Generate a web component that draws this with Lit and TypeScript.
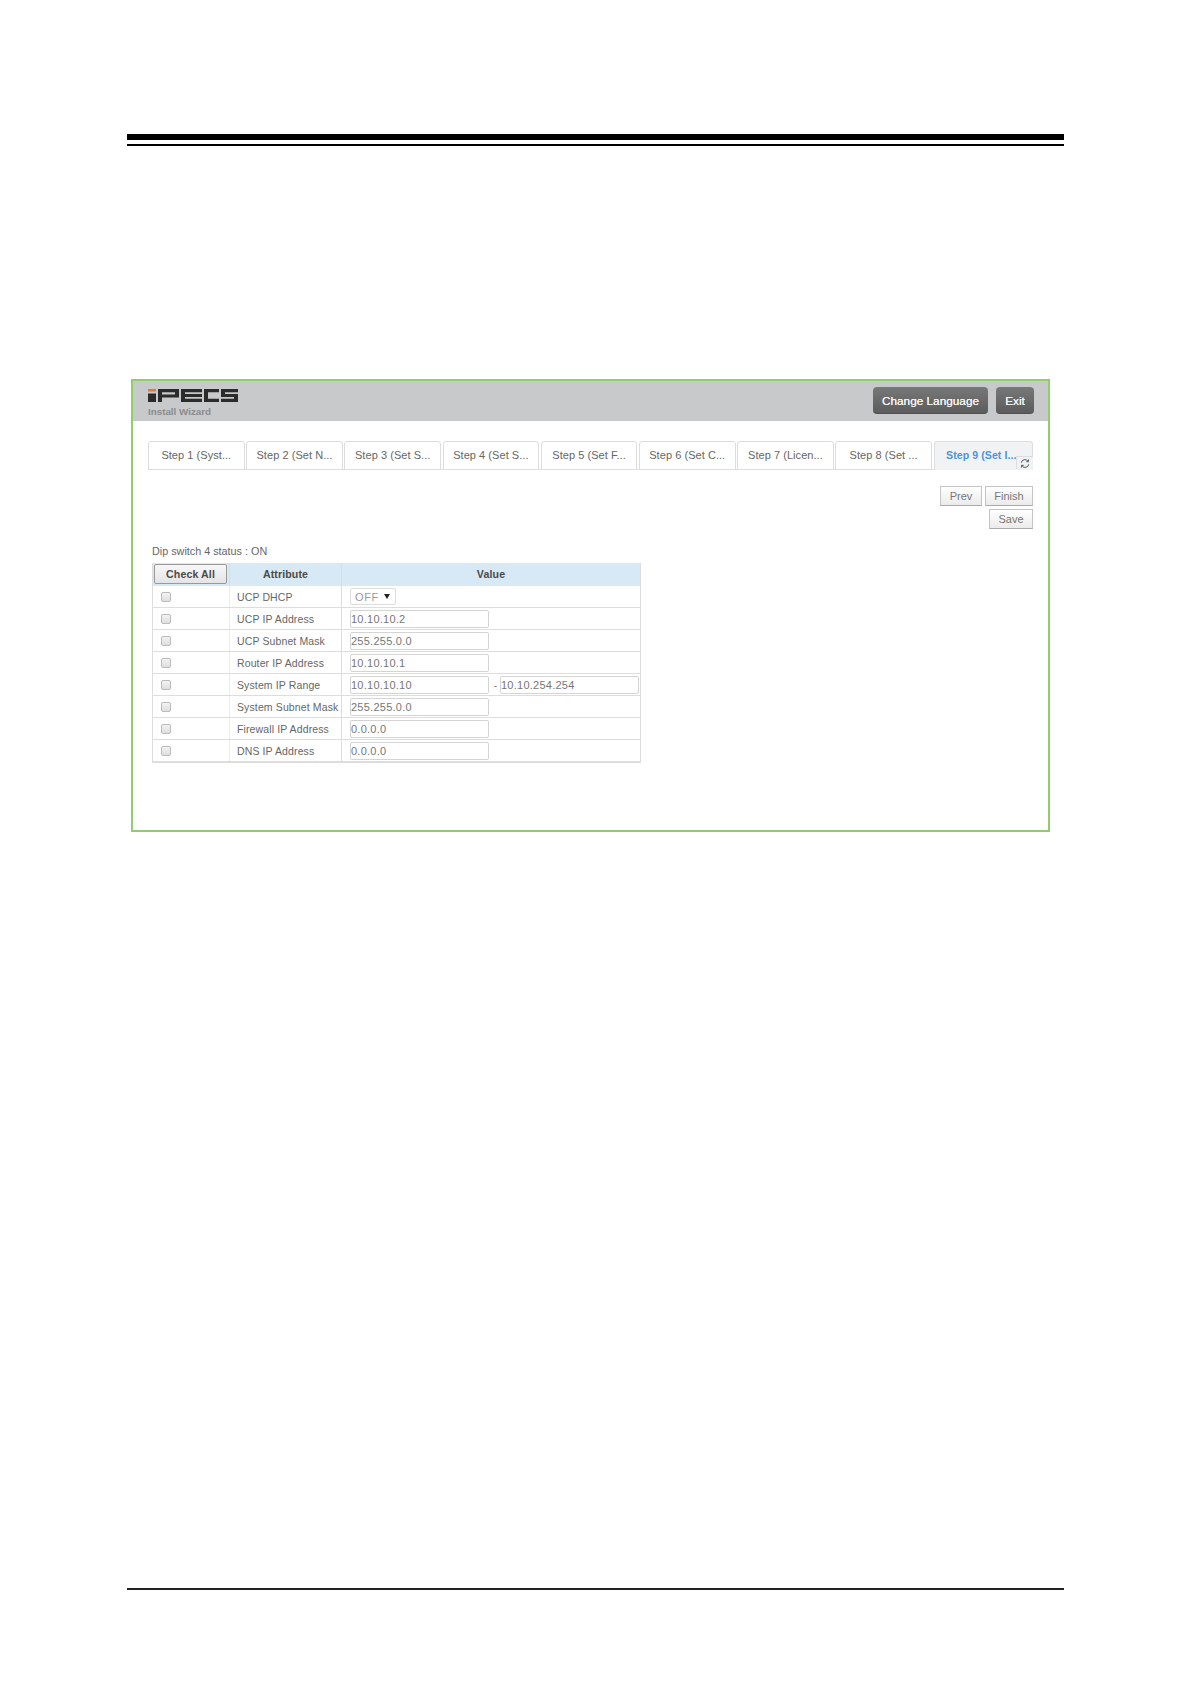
import { LitElement, html, css, svg } from "lit";
import { customElement } from "lit/decorators.js";

const TABS = ["Step 1 (Syst...", "Step 2 (Set N...", "Step 3 (Set S...", "Step 4 (Set S...", "Step 5 (Set F...", "Step 6 (Set C...", "Step 7 (Licen...", "Step 8 (Set ...", "Step 9 (Set I..."];
const ROWS: [string, string, string?][] = [
  ["UCP DHCP", ""],
  ["UCP IP Address", "10.10.10.2"],
  ["UCP Subnet Mask", "255.255.0.0"],
  ["Router IP Address", "10.10.10.1"],
  ["System IP Range", "10.10.10.10", "10.10.254.254"],
  ["System Subnet Mask", "255.255.0.0"],
  ["Firewall IP Address", "0.0.0.0"],
  ["DNS IP Address", "0.0.0.0"],
];

const logo = svg`<svg class="logo" width="90" height="13" viewBox="0 0 90 13">
  <rect x="0" y="0" width="8" height="2.500" fill="#e8792b"/>
  <rect x="0" y="4.500" width="8" height="8.500" fill="#2b2b2b"/>
  <path fill="#2b2b2b" fill-rule="evenodd" d="M10 0h21v8.500h-17v4.500h-4zM14 3.200v2.200h13v-2.200z"/>
  <path fill="#2b2b2b" d="M33 0h21v3.200h-17v1.700h17v3h-17v1.900h17v3.200h-21z"/>
  <path fill="#2b2b2b" d="M56 0h15v3.200h-11v6.600h11v3.200h-15z"/>
  <path fill="#2b2b2b" d="M73 0h17v3.200h-13v1.700h13v8.100h-17v-3.200h13v-1.900h-13z"/>
</svg>`;

@customElement("app-root")
export class AppRoot extends LitElement {
  static styles = css`
    :host { display: block; width: 1191px; height: 1684px; background: #fff; font-family: "Liberation Sans", Arial, sans-serif; color: #666; overflow: hidden; }
    .page { padding: 134px 127px 0; display: flex; flex-direction: column; height: 1684px; box-sizing: border-box; }
    .rule-top { height: 6px; background: #000; margin-bottom: 4px; }
    .rule-thin { height: 2px; background: #000; }
    .frame { margin: 233px 14px 0 4px; height: 453px; border: 2px solid #92cc6c; box-sizing: border-box; display: flex; flex-direction: column; }
    .head { height: 40px; flex: none; background: #c8c9ca; display: flex; align-items: flex-start; padding: 6px 14px 0 15px; box-sizing: border-box; }
    .brand { display: flex; flex-direction: column; margin-top: 2px; }
    .logo { display: block; }
    .sub { font-size: 9.8px; font-weight: bold; color: #8a8c8d; margin-top: 4px; line-height: 12px; }
    .head-btns { margin-left: auto; display: flex; gap: 8px; }
    .dark { height: 27px; box-sizing: border-box; padding-top: 2px; border-radius: 4px; background: linear-gradient(#777878, #5c5c5c); color: #f4f4f4; font-size: 11.8px; text-shadow: 0 0 0.6px #fff; display: flex; align-items: center; justify-content: center; border-bottom: 1px solid #505050; }
    .lang { width: 115px; }
    .exit { width: 38px; }
    .body { padding: 20px 15px 0 15px; display: flex; flex-direction: column; }
    .tabs { display: flex; gap: 1.6px; height: 28px; border-bottom: 1px solid #ddd; position: relative; }
    .tab { width: 96.6px; flex: none; box-sizing: border-box; height: 29px; border: 1px solid #ddd; border-radius: 3px 3px 0 0; font-size: 11px; letter-spacing: 0.05px; color: #666; display: flex; align-items: center; justify-content: center; white-space: nowrap; padding-bottom: 2px; }
    .tab.on { flex: 1; background: #f1f2f3; color: #4a94e4; font-size: 10.6px; font-weight: bold; border-bottom-color: #f1f2f3; padding-right: 4px; }
    .refresh { position: absolute; right: 0; bottom: 0; width: 17px; height: 13px; background: #f1f2f3; border-left: 1px solid #ddd; border-top: 1px solid #ddd; box-sizing: border-box; display: flex; align-items: center; justify-content: center; }
    .actions { margin-top: 16px; display: flex; flex-direction: column; align-items: flex-end; gap: 3px; }
    .line { display: flex; gap: 3px; }
    .btn { height: 20px; box-sizing: border-box; border: 1px solid #c4c4c4; border-bottom-color: #aaa; background: linear-gradient(#fff, #ebebeb); color: #777; font-size: 11px; display: flex; align-items: center; justify-content: center; }
    .prev { width: 42px; }
    .finish { width: 48px; }
    .save { width: 44px; }
    .dip { margin: 16px 0 0 4px; font-size: 10.8px; line-height: 13px; color: #666; }
    .table { margin: 5px 0 0 4px; width: 489px; border: 1px solid #ddd; border-top: 0; box-sizing: border-box; font-size: 10.5px; letter-spacing: 0.12px; color: #666; }
    .row { display: grid; grid-template-columns: 76px 112px 1fr; height: 21.95px; box-sizing: border-box; border-bottom: 1px solid #ddd; align-items: center; }
    .row > div { height: 100%; display: flex; align-items: center; box-sizing: border-box; white-space: nowrap; padding-top: 1px; }
    .row.hd { height: 23px; background: #d7e9f4; font-weight: bold; color: #4a4a4a; border-bottom: 0; font-size: 10.6px; }
    .row.hd > div { justify-content: center; padding-top: 0; padding-bottom: 2px; }
    .c2 { border-left: 1px solid #ececec; padding-left: 7px; }
    .c3 { border-left: 1px solid #ddd; padding-left: 8px; }
    .row.hd .c2, .row.hd .c3 { padding-left: 0; border-left-color: #cfe0ea; }
    .cb { width: 10px; height: 10px; box-sizing: border-box; margin-left: 8px; border: 1px solid #bbb; border-radius: 2px; background: linear-gradient(#f2f2f2, #dedede); }
    .all { width: 73px; height: 20px; margin-left: -1px; flex: none; box-sizing: border-box; border: 1px solid #999; border-radius: 2px; background: linear-gradient(#f8f8f8, #e4e4e4); font-weight: bold; color: #4a4a4a; display: flex; align-items: center; justify-content: center; font-size: 10.6px; }
    .input { width: 139px; height: 18px; box-sizing: border-box; border: 1px solid #d4d4d4; border-radius: 2px; background: #fff; font-size: 11px; letter-spacing: 0.25px; color: #777; padding-left: 0; display: flex; align-items: center; }
    .input.wide { width: 139px; }
    .dash { margin: 0 1px 0 3px; width: 7px; text-align: center; color: #777; }
    .select { width: 46px; height: 17px; box-sizing: border-box; border: 1px solid #ddd; border-radius: 2px; font-size: 11px; letter-spacing: 0.6px; color: #999; padding: 0 0 0 4px; display: flex; align-items: center; justify-content: space-between; }
    .arrow { width: 0; height: 0; border-left: 3px solid transparent; border-right: 3px solid transparent; border-top: 5px solid #222; margin-right: 5px; }
    .spacer { flex: 1; }
    .rule-bottom { height: 1.500px; background: #222; margin-bottom: 94.500px; }
  `;

  render() {
    return html`<div class="page">
      <div class="rule-top"></div>
      <div class="rule-thin"></div>
      <div class="frame">
        <div class="head">
          <div class="brand">${logo}<div class="sub">Install Wizard</div></div>
          <div class="head-btns"><div class="dark lang">Change Language</div><div class="dark exit">Exit</div></div>
        </div>
        <div class="body">
          <div class="tabs">
            ${TABS.map((t, i) => html`<div class="tab ${i === 8 ? "on" : ""}">${t}</div>`)}
            <div class="refresh"><svg width="10" height="9" viewBox="0 0 10 9" fill="none" stroke="#555" stroke-width="1"><path d="M1.300 3.700A3.700 3.700 0 0 1 8 2.200M8.700 5.300A3.700 3.700 0 0 1 2 6.800"/><path d="M8.500 .5v2.200h-2.200M1.500 8.500v-2.200h2.200"/></svg></div>
          </div>
          <div class="actions">
            <div class="line"><div class="btn prev">Prev</div><div class="btn finish">Finish</div></div>
            <div class="btn save">Save</div>
          </div>
          <div class="dip">Dip switch 4 status : ON</div>
          <div class="table">
            <div class="row hd"><div><div class="all">Check All</div></div><div class="c2">Attribute</div><div class="c3">Value</div></div>
            ${ROWS.map((r, i) => html`<div class="row">
              <div><div class="cb"></div></div>
              <div class="c2">${r[0]}</div>
              <div class="c3">
                ${i === 0
                  ? html`<div class="select">OFF<span class="arrow"></span></div>`
                  : html`<div class="input">${r[1]}</div>`}
                ${r[2] ? html`<span class="dash">-</span><div class="input wide">${r[2]}</div>` : ""}
              </div>
            </div>`)}
          </div>
        </div>
      </div>
      <div class="spacer"></div>
      <div class="rule-bottom"></div>
    </div>`;
  }
}
